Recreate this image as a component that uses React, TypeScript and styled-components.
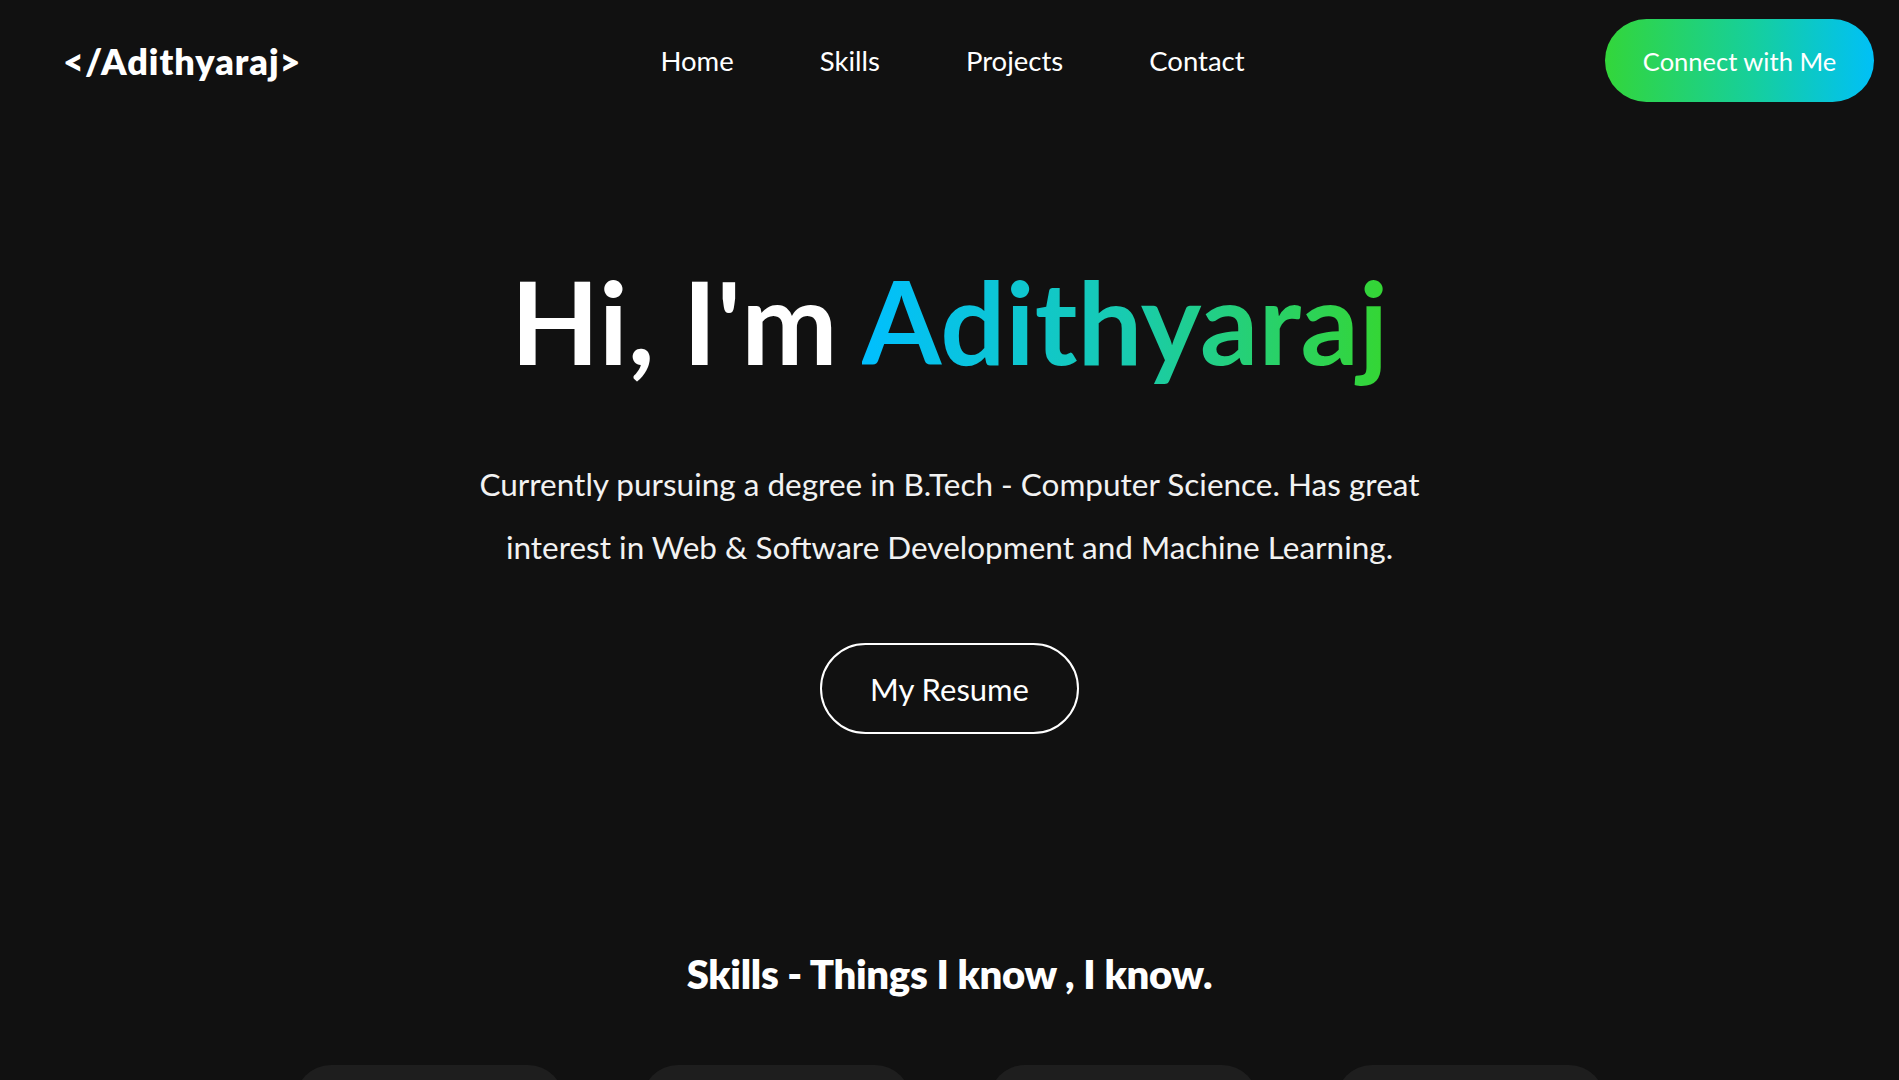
import React from 'react';
import styled, { createGlobalStyle } from 'styled-components';

const GlobalStyle = createGlobalStyle`
  html, body {
    margin: 0;
    padding: 0;
    background: #111111;
  }

  body {
    font-family: Lato, 'Noto Sans', sans-serif;
    color: #ffffff;
    overflow-x: hidden;
  }

  * {
    box-sizing: border-box;
  }
`;

const links = ['Home', 'Skills', 'Projects', 'Contact'];
const skillCards = [1, 2, 3, 4];

const App: React.FC = () => {
  return (
    <>
      <GlobalStyle />
      <Page>
        <NavBar>
          <Logo>&lt;/Adithyaraj&gt;</Logo>
          <NavLinks>
            {links.map((link) => (
              <NavLink key={link} href={`#${link.toLowerCase()}`}>
                {link}
              </NavLink>
            ))}
          </NavLinks>
          <ConnectSlot>
            <ConnectButton>Connect with Me</ConnectButton>
          </ConnectSlot>
        </NavBar>

        <Hero>
          <Title>
            Hi, I'm <Gradient>Adithyaraj</Gradient>
          </Title>
          <Intro>
            Currently pursuing a degree in B.Tech - Computer Science. Has great
            interest in Web &amp; Software Development and Machine Learning.
          </Intro>
          <ResumeButton>My Resume</ResumeButton>
        </Hero>

        <Skills id='skills'>
          <SectionTitle>Skills - Things I know , I know.</SectionTitle>
          <CardRow>
            {skillCards.map((card) => (
              <SkillCard key={card} />
            ))}
          </CardRow>
        </Skills>
      </Page>
    </>
  );
};

const Page = styled.div`
  width: 100%;
  min-height: 100vh;
  background: #111111;
`;

const NavBar = styled.nav`
  display: grid;
  grid-template-columns: 1fr auto 1fr;
  align-items: center;
  padding: 19px 25px 0;
`;

const Logo = styled.div`
  margin-left: 38px;
  font-size: 36px;
  font-weight: 800;
  letter-spacing: 1px;
  color: #ffffff;
`;

const NavLinks = styled.div`
  display: flex;
  align-items: center;
  gap: 86px;
  padding-left: 6px;
`;

const NavLink = styled.a`
  color: #ffffff;
  text-decoration: none;
  font-size: 27.5px;
  font-weight: 400;
`;

const ConnectSlot = styled.div`
  display: flex;
  justify-content: flex-end;
`;

const ConnectButton = styled.button`
  height: 83px;
  width: 269px;
  border: none;
  border-radius: 42px;
  background: linear-gradient(90deg, #33d63a 0%, #16cf9c 55%, #00c0f7 100%);
  color: #ffffff;
  font-family: inherit;
  font-size: 25.5px;
  font-weight: 400;
  cursor: pointer;
`;

const Hero = styled.section`
  display: flex;
  flex-direction: column;
  align-items: center;
  padding-top: 149px;
`;

const Title = styled.h1`
  margin: 0;
  font-size: 115px;
  font-weight: 700;
  line-height: 1.2;
  color: #ffffff;
`;

const Gradient = styled.span`
  background: linear-gradient(90deg, #00bfff 0%, #18cbb0 50%, #35d632 100%);
  -webkit-background-clip: text;
  background-clip: text;
  color: transparent;
`;

const Intro = styled.p`
  width: 990px;
  margin: 64px 0 0;
  text-align: center;
  font-size: 31.5px;
  line-height: 63px;
  color: #f2f2f2;
`;

const ResumeButton = styled.button`
  margin-top: 64px;
  width: 259px;
  height: 91px;
  border: 2px solid #ffffff;
  border-radius: 46px;
  background: transparent;
  color: #ffffff;
  font-family: inherit;
  font-size: 31px;
  cursor: pointer;
`;

const Skills = styled.section`
  display: flex;
  flex-direction: column;
  align-items: center;
  padding-top: 216px;
`;

const SectionTitle = styled.h2`
  margin: 0;
  font-size: 40px;
  font-weight: 800;
  letter-spacing: -0.3px;
  color: #ffffff;
`;

const CardRow = styled.div`
  display: flex;
  gap: 78px;
  margin-top: 67px;
`;

const SkillCard = styled.div`
  width: 269px;
  height: 320px;
  border-radius: 36px;
  background: #1e1e1e;
`;

export default App;
